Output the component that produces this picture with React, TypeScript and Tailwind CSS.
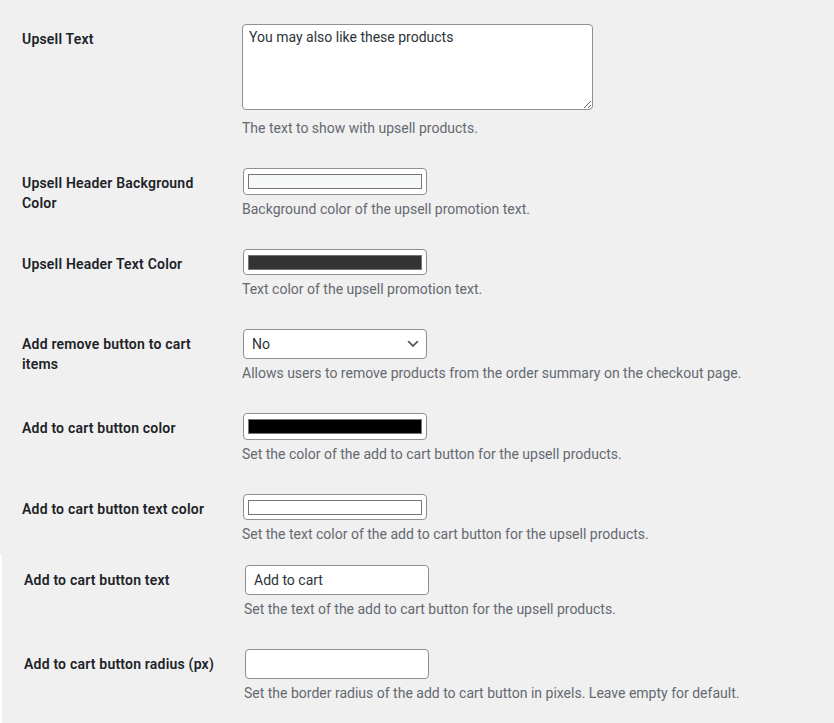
import type { ReactNode } from "react";

const swatchRows = {
  bg: "#f6f7f7",
  text: "#333333",
  button: "#000000",
  buttonText: "#ffffff",
};

function Row({
  label,
  desc,
  children,
  pt = "pt-[15px]",
  pb = "pb-[15px]",
  descGap = "mt-1",
}: {
  label: string;
  desc: string;
  children: ReactNode;
  pt?: string;
  pb?: string;
  descGap?: string;
}) {
  return (
    <div className={`flex items-start ${pt} ${pb}`}>
      <div className="w-[242px] shrink-0 pl-[22px] pr-[20px] pt-[5px]">
        <label className="block text-sm font-semibold leading-5 tracking-[0.2px] text-[#1d2327]">{label}</label>
      </div>
      <div className="flex flex-col items-start">
        {children}
        <p className={`${descGap} text-sm leading-5 text-[#646970]`}>{desc}</p>
      </div>
    </div>
  );
}

function ColorField({ color }: { color: string }) {
  return (
    <div className="ml-px h-[26.5px] w-[184px] rounded border border-[#8c8f94] bg-white px-1 py-[5px]">
      <div className="h-[15px] w-full border border-[#767676]" style={{ backgroundColor: color }} />
    </div>
  );
}

function SelectField({ value }: { value: string }) {
  return (
    <div className="ml-px flex h-[30px] w-[184px] items-center justify-between rounded border border-[#8c8f94] bg-white pl-2 pr-[5px] text-sm text-[#2c3338]">
      <span>{value}</span>
      <svg viewBox="0 0 20 20" className="h-4 w-4">
        <path d="M5 6l5 5 5-5 2 1-7 7-7-7z" fill="#555" />
      </svg>
    </div>
  );
}

function TextField({ value }: { value: string }) {
  return (
    <input
      readOnly
      defaultValue={value}
      className="ml-px h-[30px] w-[184px] rounded border border-[#8c8f94] bg-white px-2 text-sm text-[#2c3338] outline-none"
    />
  );
}

export default function App() {
  return (
    <div className="min-h-[723px] w-[834px] bg-[#f0f0f1] font-['Segoe_UI',Roboto,'Noto_Sans',sans-serif]">
      {/* first capture */}
      <div className="pt-[9px]">
        <Row label="Upsell Text" desc="The text to show with upsell products." descGap="mt-2">
          <textarea
            readOnly
            defaultValue="You may also like these products"
            className="block h-[86px] w-[351px] rounded border border-[#8c8f94] bg-white px-[6px] py-[2px] text-sm leading-5 text-[#2c3338] outline-none"
          />
        </Row>
        <Row label="Upsell Header Background Color" desc="Background color of the upsell promotion text.">
          <ColorField color={swatchRows.bg} />
        </Row>
        <Row label="Upsell Header Text Color" desc="Text color of the upsell promotion text.">
          <ColorField color={swatchRows.text} />
        </Row>
        <Row
          label="Add remove button to cart items"
          desc="Allows users to remove products from the order summary on the checkout page."
        >
          <SelectField value="No" />
        </Row>
        <Row label="Add to cart button color" desc="Set the color of the add to cart button for the upsell products.">
          <ColorField color={swatchRows.button} />
        </Row>
        <Row
          label="Add to cart button text color"
          desc="Set the text color of the add to cart button for the upsell products."
          pb="pb-[11px]"
        >
          <ColorField color={swatchRows.buttonText} />
        </Row>
      </div>

      {/* second capture, pasted slightly offset */}
      <div className="border-l-2 border-white">
        <Row
          label="Add to cart button text"
          desc="Set the text of the add to cart button for the upsell products."
          pt="pt-[10px]"
        >
          <TextField value="Add to cart" />
        </Row>
        <Row
          label="Add to cart button radius (px)"
          desc="Set the border radius of the add to cart button in pixels. Leave empty for default."
          pb="pb-[20px]"
        >
          <TextField value="" />
        </Row>
      </div>
    </div>
  );
}
